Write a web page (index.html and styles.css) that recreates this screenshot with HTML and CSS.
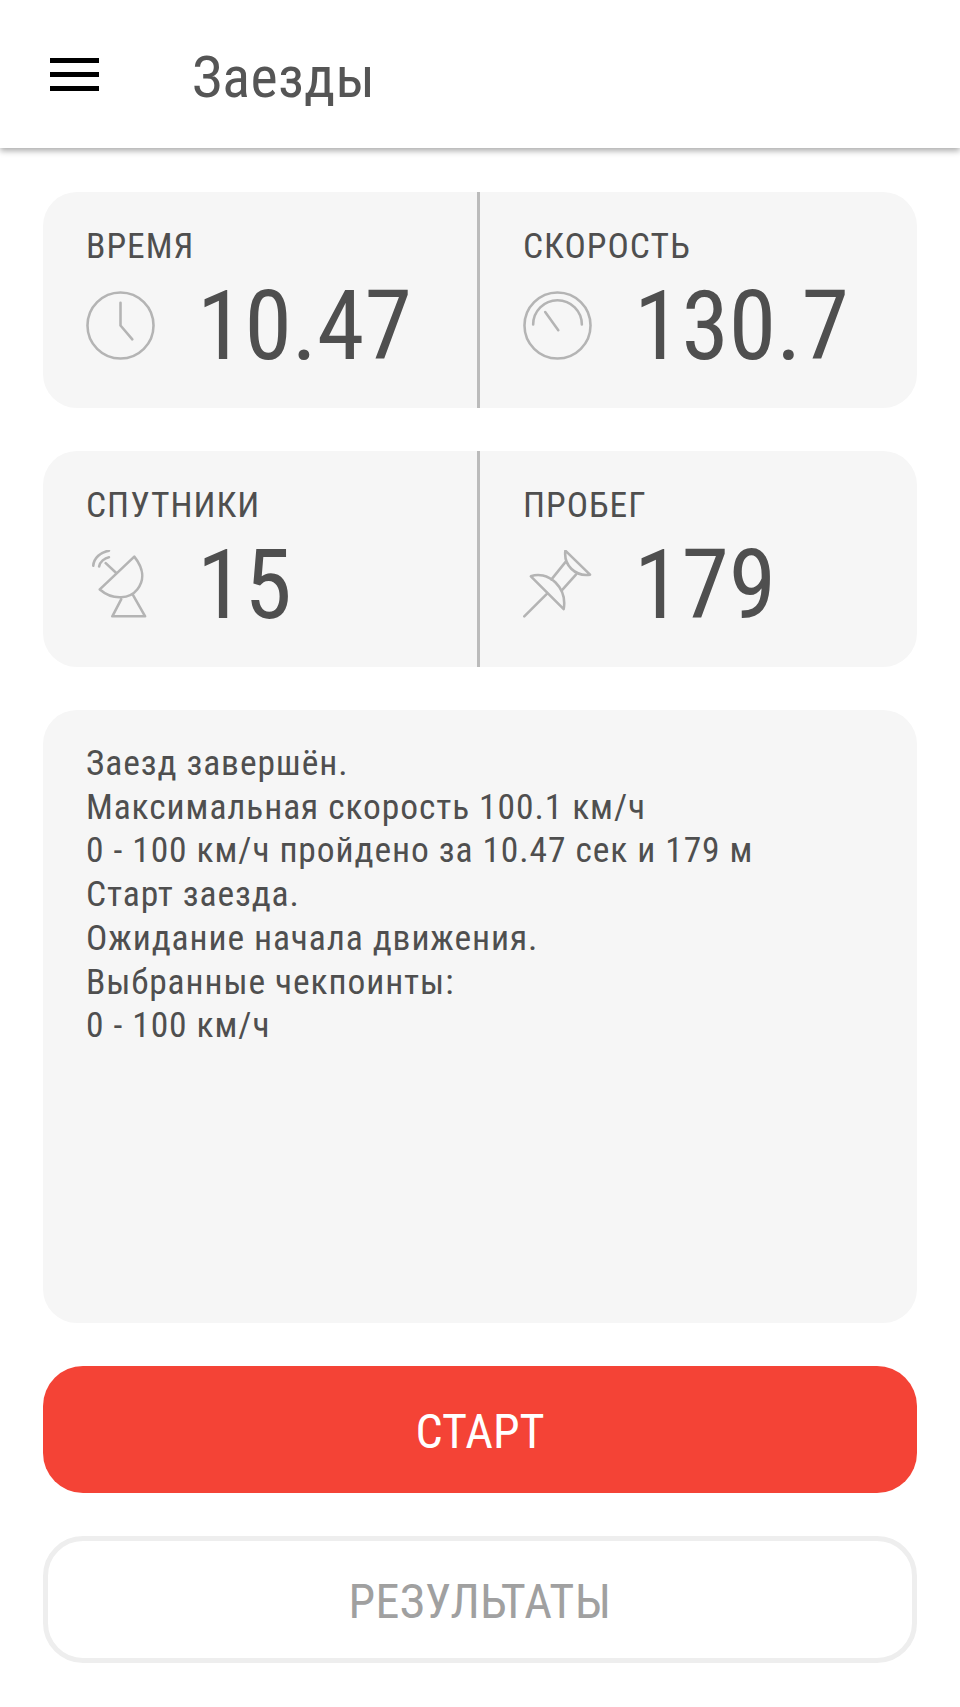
FILE: index.html
```html
<!DOCTYPE html>
<html lang="ru">
<head>
<meta charset="utf-8">
<title>Заезды</title>
<link rel="stylesheet" href="styles.css">
</head>
<body>
<header class="appbar">
  <div class="burger"><span></span><span></span><span></span></div>
  <h1 class="title">Заезды</h1>
</header>
<main class="content">
  <section class="stats">
    <div class="stat">
      <div class="label">ВРЕМЯ</div>
      <div class="row">
        <svg class="icon" viewBox="0 0 70 70"><circle cx="35" cy="35" r="33.5"/><path d="M35 12V35L47 49"/></svg>
        <div class="value">10.47</div>
      </div>
    </div>
    <div class="stat">
      <div class="label">СКОРОСТЬ</div>
      <div class="row">
        <svg class="icon" viewBox="0 0 70 70"><circle cx="35" cy="35" r="33.5"/><path d="M10.3 34A24.7 24.7 0 0 1 59.7 34M22.5 21.3L35.8 39.7"/></svg>
        <div class="value">130.7</div>
      </div>
    </div>
  </section>
  <section class="stats">
    <div class="stat">
      <div class="label">СПУТНИКИ</div>
      <div class="row">
        <svg class="icon" viewBox="0 0 70 70"><path d="M49 6.7C58 18 60 30 52 40C45 49 28 52 14 40ZM30.7 23.3L20 13.3M23.3 7.3C19 8 14 12 13.3 16.7M23.3 .7C15 2 8 8 7.3 16M35.7 50L26.7 67.3H60L47.3 45"/></svg>
        <div class="value">15</div>
      </div>
    </div>
    <div class="stat">
      <div class="label">ПРОБЕГ</div>
      <div class="row">
        <svg class="icon" viewBox="0 0 70 70"><path d="M1.3 67.3L23.7 45M8 26.7C15 24 25 25 33 33C40 40 43 50 41.3 60ZM43 .7C42 8 45 15 49 19C54 24 61 26 68 25ZM43 12.3L28.7 30M53.7 25L40.3 40"/></svg>
        <div class="value">179</div>
      </div>
    </div>
  </section>
  <section class="log">
    <p>Заезд завершён.</p>
    <p>Максимальная скорость 100.1 км/ч</p>
    <p>0 - 100 км/ч пройдено за 10.47 сек и 179 м</p>
    <p>Старт заезда.</p>
    <p>Ожидание начала движения.</p>
    <p>Выбранные чекпоинты:</p>
    <p>0 - 100 км/ч</p>
  </section>
  <button class="btn start">СТАРТ</button>
  <button class="btn results">РЕЗУЛЬТАТЫ</button>
</main>
</body>
</html>
```
FILE: styles.css
```css
* { box-sizing: border-box; }
html, body { margin: 0; padding: 0; }
body {
  width: 960px;
  height: 1707px;
  background: #fff;
  color: #4f4f4f;
  font-family: "Roboto Condensed", Roboto, sans-serif;
  overflow: hidden;
}
.appbar {
  height: 148px;
  display: flex;
  align-items: center;
  padding-left: 50px;
  background: #fff;
  box-shadow: 0 3px 6px rgba(0,0,0,.32);
}
.burger { width: 49px; display: flex; flex-direction: column; gap: 9px; }
.burger span { height: 5px; background: #000; }
.title { margin: 6px 0 0 93px; font-size: 58px; font-weight: 400; line-height: 1; color: #555; letter-spacing: .3px; }
.content { padding: 44px 43px 0; display: flex; flex-direction: column; gap: 43px; }
.stats { height: 216px; display: grid; grid-template-columns: 434px 1fr; background: #f6f6f6; border-radius: 34px; overflow: hidden; }
.stat { padding: 34px 43px 0; display: flex; flex-direction: column; }
.stat + .stat { border-left: 3px solid #bbb; }
.label { font-size: 35.5px; line-height: 40px; letter-spacing: 1px; }
.row { display: flex; align-items: center; margin-top: 14px; height: 92px; }
.icon { width: 69px; height: 69px; flex: none; fill: none; stroke: #b4b4b4; stroke-width: 2.6; stroke-linecap: round; stroke-linejoin: round; margin-top: -2px; }
.value { margin-left: 42px; font-size: 96px; line-height: 92px; }
.log { height: 613px; padding: 32px 43px; background: #f6f6f6; border-radius: 34px; font-size: 35.5px; line-height: 43.7px; letter-spacing: .9px; }
.log p { margin: 0; }
.btn { height: 127px; border-radius: 40px; font: inherit; font-size: 48px; padding: 4px 0 0; display: block; width: 100%; text-align: center; }
.start { background: #f44336; color: #fff; border: 0; }
.results { background: #fff; color: #a0a0a0; border: 5px solid #eee; letter-spacing: .4px; }
```
